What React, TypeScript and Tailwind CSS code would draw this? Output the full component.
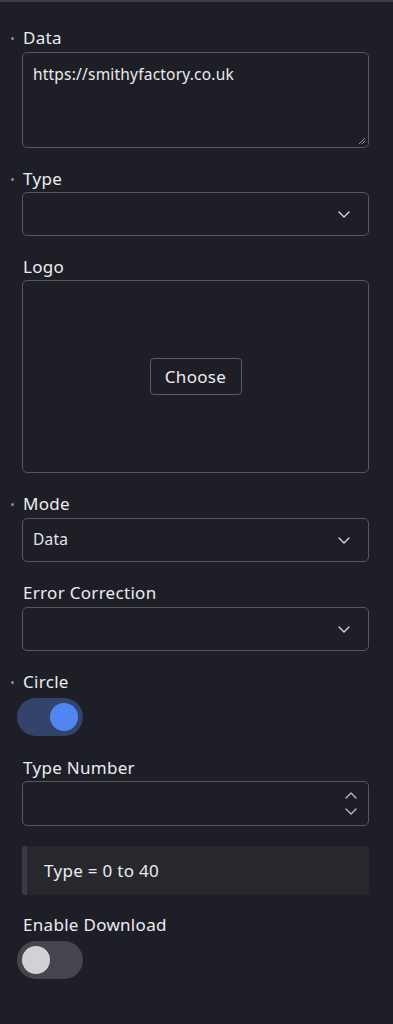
import { ReactNode } from "react";

const Chevron = () => (
  <svg width="12" height="7" viewBox="0 0 12 7" fill="none" className="text-[#d8d8dc]">
    <path d="M1 1l5 5 5-5" stroke="currentColor" strokeWidth="1.4" strokeLinecap="round" strokeLinejoin="round" />
  </svg>
);

const Label = ({ text, dot }: { text: string; dot?: boolean }) => (
  <div className="relative h-5 pl-[23px] text-[17px] leading-5 tracking-[0.3px] text-[#ececee]">
    {dot ? (
      <span className="absolute left-[11px] top-[9px] h-[3px] w-[3px] rounded-full bg-[#8a8b90]" />
    ) : null}
    {text}
  </div>
);

const Field = ({ children, className }: { children?: ReactNode; className?: string }) => (
  <div
    className={`ml-[22px] mr-[24px] rounded-[5px] border border-[#57585e] bg-[#1e1f26] ${className ?? ""}`}
  >
    {children}
  </div>
);

const Select = ({ value }: { value?: string }) => (
  <Field className="flex h-[44px] items-center justify-between pl-[10px] pr-[18px]">
    <span className="text-[15.5px] tracking-[0.2px] text-[#e4e4e6]">{value}</span>
    <Chevron />
  </Field>
);

const Toggle = ({ on }: { on: boolean }) => (
  <div
    className={`ml-[17px] flex h-[38px] w-[66px] items-center rounded-full px-[5px] ${
      on ? "justify-end bg-[#34436a]" : "justify-start bg-[#45464d]"
    }`}
  >
    <span
      className={`h-[28px] w-[28px] rounded-full ${on ? "bg-[#4f86f2]" : "bg-[#d2d2d4]"}`}
    />
  </div>
);

const App = () => {
  return (
    <div
      className="min-h-[1024px] w-[393px] border-t-2 border-[#3c3d43] bg-[#1e1f26] pt-[26px]"
      style={{ fontFamily: "'Noto Sans', Lato, sans-serif" }}
    >
      <Label text="Data" dot />
      <Field className="relative mt-1 h-[96px] px-[10px] pt-[9px]">
        <span className="text-[15.5px] tracking-[0.2px] text-[#ececee]">https://smithyfactory.co.uk</span>
        <svg width="8" height="8" viewBox="0 0 8 8" className="absolute bottom-[2px] right-[2px]">
          <path d="M7 1L1 7M7 4L4 7" stroke="#9a9ba0" strokeWidth="1" />
        </svg>
      </Field>

      <div className="mt-[21px]">
        <Label text="Type" dot />
      </div>
      <div className="mt-[3px]">
        <Select />
      </div>

      <div className="mt-[21px]">
        <Label text="Logo" />
      </div>
      <Field className="mt-[3px] flex h-[193px] items-center justify-center">
        <button
          type="button"
          className="h-[37px] w-[92px] rounded-[4px] border border-[#5c5d63] text-[17px] tracking-[0.3px] text-[#ececee]"
        >
          Choose
        </button>
      </Field>

      <div className="mt-[21px]">
        <Label text="Mode" dot />
      </div>
      <div className="mt-1">
        <Select value="Data" />
      </div>

      <div className="mt-[21px]">
        <Label text="Error Correction" />
      </div>
      <div className="mt-1">
        <Select />
      </div>

      <div className="mt-[21px]">
        <Label text="Circle" dot />
      </div>
      <div className="mt-[6px]">
        <Toggle on />
      </div>

      <div className="mt-[22px]">
        <Label text="Type Number" />
      </div>
      <Field className="mt-[3px] flex h-[45px] items-center justify-end pr-[11px]">
        <div className="flex flex-col items-center gap-[9px]">
          <svg width="12" height="7" viewBox="0 0 12 7" fill="none">
            <path d="M1 6l5-5 5 5" stroke="#bdbec2" strokeWidth="1.3" strokeLinecap="round" strokeLinejoin="round" />
          </svg>
          <svg width="12" height="7" viewBox="0 0 12 7" fill="none">
            <path d="M1 1l5 5 5-5" stroke="#bdbec2" strokeWidth="1.3" strokeLinecap="round" strokeLinejoin="round" />
          </svg>
        </div>
      </Field>

      <div className="ml-[22px] mr-[24px] mt-5 flex h-[49px] items-center rounded-[3px] border-l-[5px] border-[#3a3b41] bg-[#27282e] pl-[17px] text-[17px] tracking-[0.3px] text-[#ececee]">
        Type = 0 to 40
      </div>

      <div className="mt-5">
        <Label text="Enable Download" />
      </div>
      <div className="mt-[6px]">
        <Toggle on={false} />
      </div>
    </div>
  );
};

export default App;
